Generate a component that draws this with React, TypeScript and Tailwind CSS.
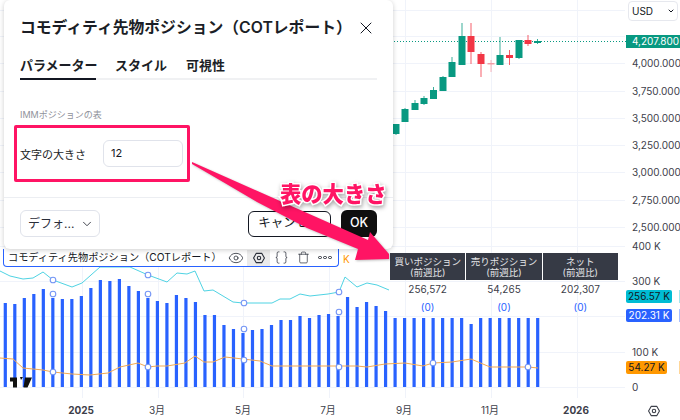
import { Eye, Braces, Trash, X, ChevronDown } from 'lucide-react'

const candles = [
  { x: 396, top: 124, bottom: 134, high: 124, low: 135, up: true },
  { x: 405, top: 109, bottom: 122, high: 108, low: 122, up: true },
  { x: 415, top: 103, bottom: 110, high: 100, low: 110, up: true },
  { x: 424, top: 98, bottom: 104, high: 96, low: 105, up: true },
  { x: 433.5, top: 90, bottom: 99, high: 87, low: 99, up: true },
  { x: 443, top: 77, bottom: 91, high: 76, low: 91, up: true },
  { x: 452, top: 62, bottom: 77, high: 57, low: 77, up: true },
  { x: 462, top: 36, bottom: 65, high: 23, low: 65, up: true },
  { x: 471, top: 36, bottom: 52, high: 23, low: 64, up: false },
  { x: 481, top: 54, bottom: 64, high: 52, low: 77, up: false },
  { x: 491, top: 63, bottom: 64.5, high: 60, low: 72, up: false, faint: true },
  { x: 500, top: 55, bottom: 65, high: 37, low: 65, up: true },
  { x: 509.5, top: 55, bottom: 58, high: 50, low: 65, up: false },
  { x: 519, top: 40, bottom: 58, high: 40, low: 59, up: true },
  { x: 528, top: 40, bottom: 44, high: 35, low: 46, up: false },
  { x: 537.5, top: 41, bottom: 43, high: 39, low: 44, up: true },
]

// bar tops, read off the reference
const barTops = [
  303, 304, 298, 294, 289, 298, 299, 299, 296, 288, 280, 281, 279, 286, 291, 298, 301, 303, 295, 298, 302,
  315, 315, 325, 329, 333, 330, 329, 325, 320, 320, 316, 318, 315, 314, 316, 297, 307, 302, 306, 311,
  318, 318, 318, 318, 318, 318, 318, 318, 324, 318, 318, 318, 318, 318, 318, 318,
]

const teal =
  '0,271 10,276 23,279 33,278 43,272 53,280 72,287 82,283 100,267 130,267 148,275 167,282 177,273 187,274 195,271 204,291 213,290 233,302 243,303 272,303 280,299 290,299 300,294 310,296 328,294 339,292 345,277 357,287 367,283 377,285 389,290'

const orange =
  '0,358 13,359 23,368 33,369 43,370 53,372 72,374 90,375 108,373 120,367 138,363 148,367 157,366 167,366 185,363 195,356 204,362 213,362 225,357 243,359 260,361 272,366 300,366 317,366 338,366 350,366 357,366 367,367 385,364 405,363 423,366 433,363 452,362 471,359 490,367 513,367 528,367 538,368'

const markers = [
  [53, 280], [53, 294], [53, 372], [148, 275], [148, 294], [148, 367],
  [244, 303], [244, 329], [244, 360], [339, 292], [339, 312], [339, 367],
  [433, 363], [528, 367],
]

const priceLabels = [
  ['4,000.000', 63], ['3,750.000', 91], ['3,500.000', 118], ['3,250.000', 145],
  ['3,000.000', 172], ['2,750.000', 200], ['2,500.000', 227],
] as const

const volumeLabels = [
  ['400 K', 246], ['300 K', 281], ['100 K', 352], ['0', 387],
] as const

const timeLabels = [
  ['2025', 81, true], ['3月', 157, false], ['5月', 243, false], ['7月', 328, false],
  ['9月', 404, false], ['11月', 490, false], ['2026', 576, true],
] as const

const tableCols = [
  { head: '買いポジション', value: '256,572' },
  { head: '売りポジション', value: '54,265' },
  { head: 'ネット', value: '202,307' },
]

function HexIcon({ size }: { size: number }) {
  return (
    <svg width={size} height={size} viewBox="0 0 18 18" fill="none" stroke="currentColor" strokeWidth="1.4">
      <path d="M5.5 3h7l3.5 6-3.5 6h-7L2 9z" strokeLinejoin="round" />
      <circle cx="9" cy="9" r="2.2" />
    </svg>
  )
}

function Chart() {
  return (
    <svg width="680" height="420" className="absolute left-0 top-0">
      {[10, 36, 63, 91, 118, 145, 172, 200, 227, 246, 281, 316, 352, 387].map((y) => (
        <line key={y} x1="0" x2="625" y1={y + 0.5} y2={y + 0.5} stroke="#f0f3fa" />
      ))}
      {[82, 158, 243, 329, 405, 491, 577].map((x) => (
        <line key={x} x1={x + 0.5} x2={x + 0.5} y1="0" y2="398" stroke="#f0f3fa" />
      ))}
      <line x1="394" x2="626" y1="41.5" y2="41.5" stroke="#089981" strokeDasharray="1 2" />
      {candles.map((c) => (
        <g key={c.x} opacity={c.faint ? 0.45 : 1}>
          <line x1={c.x} x2={c.x} y1={c.high} y2={c.low} stroke={c.up ? '#089981' : '#f23645'} strokeOpacity="0.8" />
          <rect x={c.x - 3.5} y={c.top} width="7" height={c.bottom - c.top} fill={c.up ? '#089981' : '#f23645'} />
        </g>
      ))}
      {barTops.map((top, i) => (
        <rect key={i} x={3.7 + i * 9.507} y={top} width="3.2" height={387 - top} fill="#2962ff" />
      ))}
      <polyline points={teal} fill="none" stroke="#4fd3e3" strokeWidth="1" />
      <polyline points={orange} fill="none" stroke="#f5a94f" strokeWidth="1" />
      {markers.map(([x, y], i) => (
        <circle key={i} cx={x} cy={y} r="2.8" fill="#fff" stroke="#7596f5" strokeWidth="1.1" />
      ))}
      <path d="M10 377.5h7v10h-4v-6h-3zM20 377h3l-2 3zM25 377.5h7l-4.5 10h-4z" fill="#111" />
    </svg>
  )
}

function AxisLabels() {
  return (
    <>
      {priceLabels.map(([text, y]) => (
        <span key={text} className="absolute left-[632px] -translate-y-1/2 text-[10px] leading-none text-[#3d404a]" style={{ top: y }}>
          {text}
        </span>
      ))}
      {volumeLabels.map(([text, y]) => (
        <span key={text} className="absolute left-[632px] -translate-y-1/2 text-[10px] leading-none text-[#3d404a]" style={{ top: y }}>
          {text}
        </span>
      ))}
      {timeLabels.map(([text, x, bold]) => (
        <span
          key={text}
          className={`absolute top-[410px] -translate-x-1/2 -translate-y-1/2 text-[10px] leading-none text-[#3d404a] ${bold ? 'font-bold' : ''}`}
          style={{ left: x }}
        >
          {text}
        </span>
      ))}

      <div className="absolute left-[628px] top-[1px] flex h-5 w-[50px] items-center justify-between rounded border border-[#e6e8ee] bg-white pl-[3px] pr-[2px] text-[10px] text-[#131722]">
        USD
        <ChevronDown size={8} strokeWidth={3} />
      </div>

      <div className="absolute left-[626px] top-[35px] flex h-[13px] w-[54px] items-center pl-[6px] text-[10px] text-white bg-[#089981]">
        4,207.800
      </div>
      <div className="absolute left-[626px] top-[290px] flex h-[13px] w-[46px] items-center justify-center rounded-[2px] bg-[#00bcd4] text-[10px] text-[#131722]">
        256.57 K
      </div>
      <div className="absolute left-[626px] top-[309px] flex h-[13px] w-[46px] items-center justify-center rounded-[2px] bg-[#2962ff] text-[10px] text-white">
        202.31 K
      </div>
      <div className="absolute left-[626px] top-[361px] flex h-[13px] w-[41px] items-center justify-center rounded-[2px] bg-[#ff9800] text-[10px] text-[#131722]">
        54.27 K
      </div>
      <div className="absolute left-[679px] top-[290px] h-[13px] w-px bg-[#a5e5ee]" />
      <div className="absolute left-[679px] top-[309px] h-[13px] w-px bg-[#a9c0ff]" />
      <div className="absolute left-[679px] top-[361px] h-[13px] w-px bg-[#ffd699]" />

      <div className="absolute left-[647px] top-[404px] text-[#3d404a]">
        <HexIcon size={14} />
      </div>
    </>
  )
}

function Legend() {
  return (
    <div className="absolute left-[3px] top-[249px] flex h-[18px] w-[336px] items-center justify-between rounded-b border border-t-0 border-[#2962ff] bg-white pl-[4px] pr-[1px]">
      <span className="whitespace-nowrap text-[10.2px] leading-none text-[#131722]">コモディティ先物ポジション（COTレポート）</span>
      <div className="flex items-center text-[#2a2e39]">
        <div className="flex w-[23px] justify-center"><Eye size={16} strokeWidth={1.2} /></div>
        <div className="flex h-[16px] w-[23px] items-center justify-center bg-[#ebebeb]"><HexIcon size={14} /></div>
        <div className="flex w-[23px] justify-center"><Braces size={15} strokeWidth={1.2} /></div>
        <div className="flex w-[20px] justify-center"><Trash size={13} strokeWidth={1.3} /></div>
        <div className="flex w-[24px] justify-center gap-[1.5px]">
          <span className="h-[3.5px] w-[3.5px] rounded-full border border-[#2a2e39]" />
          <span className="h-[3.5px] w-[3.5px] rounded-full border border-[#2a2e39]" />
          <span className="h-[3.5px] w-[3.5px] rounded-full border border-[#2a2e39]" />
        </div>
      </div>
    </div>
  )
}

function PositionTable() {
  return (
    <div className="absolute left-[390px] top-[253px] grid w-[228px] grid-cols-3 gap-x-px">
      {tableCols.map((col) => (
        <div key={col.head} className="flex flex-col items-center">
          <div className="flex h-[27px] w-full flex-col items-center justify-center bg-[#363a45] text-[9.5px] leading-[11px] text-[#e4e5e8]">
            <span className="whitespace-nowrap">{col.head}</span>
            <span>(前週比)</span>
          </div>
          <span className="mt-[3px] text-[10px] leading-[13px] text-[#3d404a]">{col.value}</span>
          <span className="mt-[5px] text-[10px] leading-[13px] text-[#2962ff]">(0)</span>
        </div>
      ))}
    </div>
  )
}

function Dialog() {
  return (
    <div className="absolute left-[4px] top-0 flex h-[249px] w-[389px] flex-col rounded-md bg-white shadow-[0_1px_5px_rgba(0,0,0,0.2)]">
      <div className="flex h-[56px] items-center justify-between pl-[16px] pr-[17px]">
        <h1 className="whitespace-nowrap text-[15.8px] font-semibold text-[#1b1e26]">コモディティ先物ポジション（COTレポート）</h1>
        <X size={20} strokeWidth={1.2} className="shrink-0 text-[#131722]" />
      </div>
      <div className="mx-[16px] flex h-[24px] gap-[19px] border-b-2 border-[#f0f1f3] text-[13px] font-semibold text-[#1b1e26]">
        <div className="-mb-[2px] border-b-2 border-[#131722] w-[76px] whitespace-nowrap">パラメーター</div>
        <div>スタイル</div>
        <div>可視性</div>
      </div>
      <div className="px-[16px] pt-[29px] text-[9px] leading-[12px] text-[#8f929b]">IMMポジションの表</div>
      <div className="flex items-center px-[16px] pt-[19px]">
        <span className="w-[83px] pt-[3px] text-[11px] text-[#1b1e26]">文字の大きさ</span>
        <div className="flex h-[27px] w-[80px] items-center rounded-md border border-[#e0e3eb] pl-[7px] text-[11px] text-[#131722]">12</div>
      </div>
      <div className="mt-auto flex h-[52px] items-center justify-between border-t border-[#eceef2] px-[16px]">
        <div className="flex h-[27px] w-[80px] items-center justify-between rounded-md border border-[#e0e3eb] pl-[7px] pr-[5px] text-[12px] text-[#2a2e39]">
          デフォ...
          <ChevronDown size={14} strokeWidth={1.5} />
        </div>
        <div className="flex items-center gap-[10px]">
          <div className="flex h-[26px] w-[83px] items-center justify-center rounded-md border border-[#131722] text-[12.5px] text-[#131722] whitespace-nowrap">キャンセル</div>
          <div className="flex h-[27px] w-[36px] items-center justify-center rounded-md bg-[#0f0f0f] text-[12.5px] font-medium text-white">OK</div>
        </div>
      </div>
    </div>
  )
}

export default function App() {
  return (
    <div className="relative h-[420px] w-[680px] overflow-hidden bg-white font-['Inter','Noto_Sans_CJK_JP',sans-serif]">
      <Chart />
      <AxisLabels />
      <Legend />
      <span className="absolute left-[343px] top-[253px] text-[10px] leading-[13px] text-[#ff9800]">K</span>
      <Dialog />

      {/* callout over the dialog */}
      <div className="absolute left-[14px] top-[125px] h-[57px] w-[176px] rounded-[2px] border-[3.5px] border-[#ff1464]" />
      <svg width="680" height="420" className="absolute left-0 top-0 drop-shadow-[1px_1px_1px_rgba(0,0,0,0.25)]">
        <polygon
          points="192,162 368,240 370,232 389,254 389,259 355,260 358,249 307,228 257,202 223,182 192,164"
          fill="#ff1464"
        />
      </svg>
      <span className="absolute left-[280px] top-[179px] whitespace-nowrap text-[21.3px] font-black leading-[30px] text-[#ff1464] [-webkit-text-stroke:3px_white] [paint-order:stroke_fill] drop-shadow-[1px_2px_2px_rgba(0,0,0,0.35)]">
        表の大きさ
      </span>
      <PositionTable />
    </div>
  )
}
